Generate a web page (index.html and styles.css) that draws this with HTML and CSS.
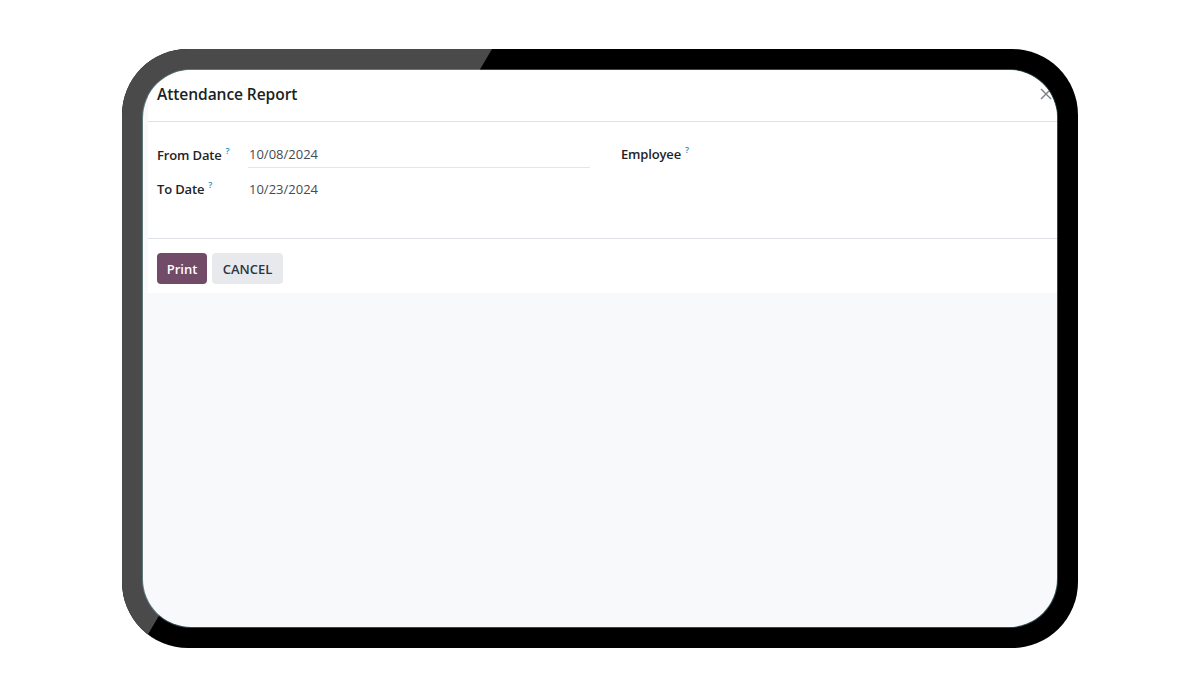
FILE: index.html
```html
<!DOCTYPE html>
<html lang="en">
<head>
<meta charset="utf-8">
<title>Attendance Report</title>
<link rel="stylesheet" href="styles.css">
</head>
<body>
<div class="frame">
  <div class="screen">
    <div class="modal">
      <div class="modal-header">
        <h4 class="modal-title">Attendance Report</h4>
        <button class="btn-close" aria-label="Close">
          <svg width="12" height="12" viewBox="0 0 12 12"><path d="M1 1 L11 11 M11 1 L1 11" stroke="#7b7f85" stroke-width="1.4" fill="none"/></svg>
        </button>
      </div>
      <div class="modal-body">
        <div class="group group-left">
          <label class="label">From Date<sup>?</sup></label>
          <div class="value value-line">10/08/2024</div>
          <label class="label">To Date<sup>?</sup></label>
          <div class="value">10/23/2024</div>
        </div>
        <div class="group group-right">
          <label class="label">Employee<sup>?</sup></label>
        </div>
      </div>
      <div class="modal-footer">
        <button class="btn btn-primary">Print</button>
        <button class="btn btn-secondary">CANCEL</button>
      </div>
    </div>
  </div>
</div>
</body>
</html>
```

FILE: styles.css
```css
* { box-sizing: border-box; }
html, body { margin: 0; padding: 0; }
body {
  background: #ffffff;
  width: 1200px;
  height: 697px;
  overflow: hidden;
  font-family: "Open Sans", "Noto Sans", "Liberation Sans", sans-serif;
}
.frame {
  position: relative;
  margin: 49px 0 0 122px;
  width: 956px;
  height: 599px;
  padding: 21px;
  border-radius: 66px;
  background: #000000;
  overflow: hidden;
}
.frame::before {
  content: "";
  position: absolute;
  inset: 0;
  background: #4a4a4a;
  clip-path: polygon(0 0, 370px 0, 18px 100%, 0 100%);
}
.screen {
  position: relative;
  width: 100%;
  height: 100%;
  border-radius: 48px;
  background: #f8f9fa;
  overflow: hidden;
  box-shadow: 0 0 0 1px rgba(140, 205, 220, 0.35);
  display: flex;
  flex-direction: column;
}
.modal {
  margin-left: 5px;
  width: 922px;
  flex: none;
  background: #ffffff;
}
.modal-header {
  height: 52px;
  display: flex;
  align-items: center;
  justify-content: space-between;
  padding: 0 18px 3px 9px;
  border-bottom: 1px solid #dee2e6;
}
.modal-title {
  margin: 0;
  font-size: 15.6px;
  font-weight: 600;
  color: #1c1f23;
  letter-spacing: -0.1px;
}
.btn-close {
  border: 0;
  background: none;
  padding: 0;
  width: 12px;
  height: 12px;
  display: flex;
}
.modal-body {
  display: flex;
  padding: 19px 0 37px 9px;
  border-bottom: 1px solid #dee2e6;
}
.group-left {
  width: 433px;
  display: grid;
  grid-template-columns: 91px 1fr;
  row-gap: 9px;
  align-items: center;
}
.group-right {
  margin-left: 31px;
  display: flex;
  align-items: flex-start;
  height: 26px;
  padding-top: 3px;
}
.label {
  font-size: 13px;
  font-weight: 600;
  color: #1f2328;
  white-space: nowrap;
  line-height: 20px;
  letter-spacing: -0.15px;
}
.label sup {
  font-size: 9px;
  color: #1d8dc0;
  margin-left: 4px;
  font-weight: 600;
  vertical-align: 6px;
  line-height: 0;
}
.value {
  font-size: 13px;
  color: #454b52;
  height: 24px;
  line-height: 24px;
  padding-left: 1px;
}
.value-line {
  height: 27px;
  padding-top: 1px;
  border-bottom: 1px solid #e4e6e9;
}
.modal-footer {
  display: flex;
  gap: 5px;
  padding: 14px 0 9px 9px;
}
.btn {
  height: 31px;
  border: 0;
  border-radius: 4px;
  font-family: inherit;
  font-size: 13px;
  font-weight: 600;
  padding: 0 8px;
}
.btn-primary {
  width: 50px;
  background: #714b67;
  color: #ffffff;
}
.btn-secondary {
  width: 71px;
  background: #e7e9ed;
  color: #2d3540;
}
```
